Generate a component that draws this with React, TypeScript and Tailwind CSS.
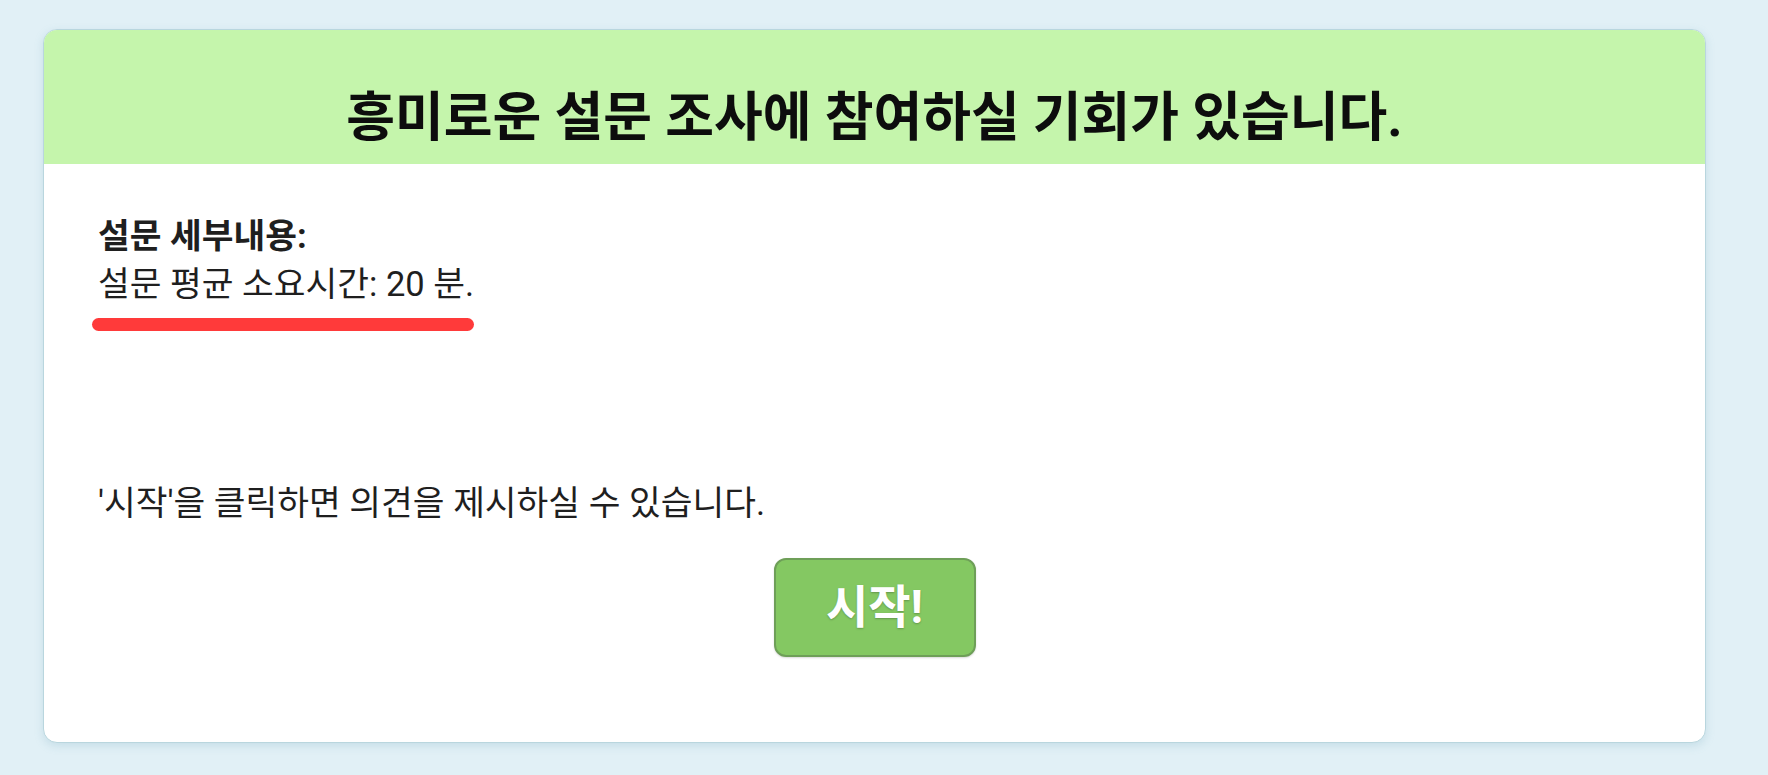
import React from 'react';

const FONT = "font-['Roboto','Noto_Sans_CJK_KR',sans-serif]";

function StartButton() {
  return (
    <button
      type="button"
      className="w-[202px] h-[99px] rounded-[12px] border-2 border-[#6e9f58] bg-[#84c862] text-white text-[46px] font-bold [text-shadow:0_1px_2px_rgba(0,0,0,0.25)] shadow-[0_1px_2px_rgba(0,0,0,0.15)]"
    >
      시작!
    </button>
  );
}

export default function App() {
  return (
    <div className={`min-h-[775px] w-full bg-[#e1f0f6] ${FONT}`}>
      <div className="pt-[29px] pl-[43px]">
        <div className="w-[1663px] h-[714px] rounded-[14px] border border-[#b9d6de] bg-white overflow-hidden shadow-[0_3px_8px_rgba(120,170,190,0.25)] flex flex-col">
          {/* heading band */}
          <div className="h-[134px] shrink-0 bg-[#c5f5ac] flex justify-center pt-[52px]">
            <h1 className="text-[53px] leading-[72px] font-bold text-[#0d0d0d] whitespace-nowrap">
              흥미로운 설문 조사에 참여하실 기회가 있습니다.
            </h1>
          </div>

          {/* survey details */}
          <div className="flex-1 px-[54px] pt-[48px] flex flex-col">
            <p className="text-[34.5px] leading-[48px] font-bold text-[#1f1f1f]">설문 세부내용:</p>
            <p className="text-[34.5px] leading-[48px] text-[#1f1f1f]">설문 평균 소요시간: 20 분.</p>
            <div className="mt-[10px] ml-[-6px] w-[382px] h-[13px] rounded-full bg-[#ff3a3a]" />

            <p className="mt-[148px] text-[34.5px] leading-[48px] text-[#1f1f1f]">
              '시작'을 클릭하면 의견을 제시하실 수 있습니다.
            </p>

            <div className="mt-[31px] flex justify-center">
              <StartButton />
            </div>
          </div>
        </div>
      </div>
    </div>
  );
}
